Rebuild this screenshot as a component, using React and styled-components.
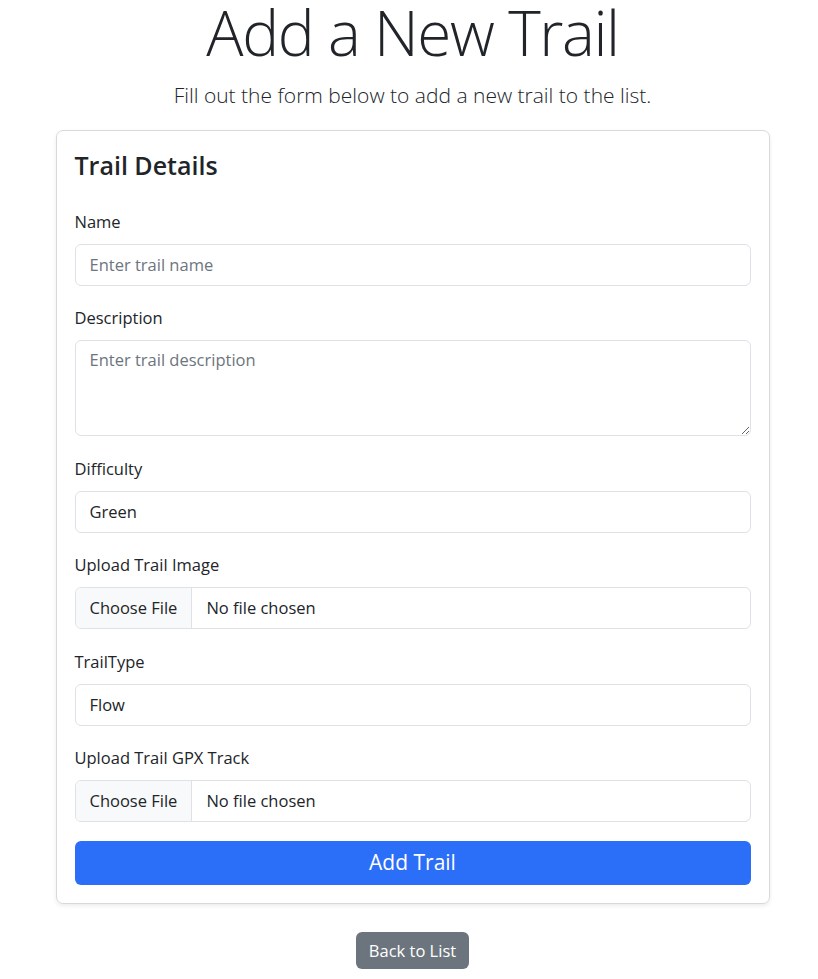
import React from 'react';
import styled, { createGlobalStyle } from 'styled-components';

const GlobalStyle = createGlobalStyle`
  body {
    margin: 0;
    background: #fff;
    color: #212529;
    font-family: 'Open Sans', 'Noto Sans', sans-serif;
    font-size: 17.6px;
    line-height: 1.5;
  }
`;

const Page = styled.main`
  display: flex;
  flex-direction: column;
  align-items: center;
  padding: 0 0 20px 7px;
`;

const Title = styled.h1`
  margin: 0;
  font-size: 62px;
  font-weight: 300;
  line-height: 65px;
  letter-spacing: -1.4px;
`;

const Lead = styled.p`
  margin: 15px 0 18px;
  font-size: 21px;
  font-weight: 300;
  line-height: 1.5;
`;

const Card = styled.section`
  box-sizing: border-box;
  width: 714px;
  padding: 19px 18px 18px;
  border: 1px solid #d9d9d9;
  border-radius: 7px;
  box-shadow: 0 2px 4px rgba(0, 0, 0, 0.08);
`;

const CardTitle = styled.h4`
  margin: 0 0 28px;
  font-size: 25px;
  font-weight: 600;
  line-height: 1.2;
`;

const Group = styled.div`
  margin-bottom: ${(p) => (p.last ? '0' : '18.5px')};
`;

const Label = styled.label`
  display: block;
  margin-bottom: 9px;
  line-height: 27px;
  font-size: 16.5px;
`;

const Control = styled.input`
  display: block;
  box-sizing: border-box;
  width: 100%;
  height: 42px;
  padding: 0 14px;
  border: 1px solid #dee2e6;
  border-radius: 6px;
  font: inherit;
  font-size: 16.5px;
  color: #212529;
  background: #fff;
  outline: none;

  &::placeholder {
    color: #6c757d;
  }
`;

const TextArea = styled.textarea`
  display: block;
  box-sizing: border-box;
  width: 100%;
  height: 96px;
  padding: 7px 14px;
  border: 1px solid #dee2e6;
  border-radius: 6px;
  font: inherit;
  font-size: 16.5px;
  line-height: 1.5;
  color: #212529;
  outline: none;

  &::placeholder {
    color: #6c757d;
  }
`;

const FileControl = styled.label`
  display: flex;
  align-items: stretch;
  box-sizing: border-box;
  height: 42px;
  border: 1px solid #dee2e6;
  border-radius: 6px;
  overflow: hidden;
  font-size: 16.5px;
  cursor: pointer;

  input {
    display: none;
  }
`;

const FileButton = styled.span`
  display: flex;
  align-items: center;
  padding: 0 14px;
  background: #f8f9fa;
  border-right: 1px solid #dee2e6;
`;

const FileName = styled.span`
  display: flex;
  align-items: center;
  padding: 0 14px;
`;

const SubmitButton = styled.button`
  display: block;
  width: 100%;
  height: 44px;
  margin-top: 19px;
  border: none;
  border-radius: 6px;
  background: #2b6ef8;
  color: #fff;
  font: inherit;
  font-size: 21px;
  cursor: pointer;
`;

const BackButton = styled.a`
  display: inline-block;
  margin-top: 28px;
  padding: 5px 13px;
  border-radius: 6px;
  background: #6c757d;
  color: #fff;
  font-size: 16.5px;
  line-height: 27px;
  text-decoration: none;
`;

function FileField({ id, label, last }) {
  return (
    <Group last={last}>
      <Label htmlFor={id}>{label}</Label>
      <FileControl>
        <input id={id} type="file" />
        <FileButton>Choose File</FileButton>
        <FileName>No file chosen</FileName>
      </FileControl>
    </Group>
  );
}

function TextField({ id, label, ...rest }) {
  return (
    <Group>
      <Label htmlFor={id}>{label}</Label>
      <Control id={id} type="text" {...rest} />
    </Group>
  );
}

export default function App() {
  return (
    <>
      <GlobalStyle />
      <Page>
        <Title>Add a New Trail</Title>
        <Lead>Fill out the form below to add a new trail to the list.</Lead>

        <Card>
          <CardTitle>Trail Details</CardTitle>
          <form onSubmit={(e) => e.preventDefault()}>
            <TextField id="name" label="Name" placeholder="Enter trail name" />
            <Group>
              <Label htmlFor="description">Description</Label>
              <TextArea id="description" placeholder="Enter trail description" />
            </Group>
            <TextField id="difficulty" label="Difficulty" defaultValue="Green" />
            <FileField id="image" label="Upload Trail Image" />
            <TextField id="trailType" label="TrailType" defaultValue="Flow" />
            <FileField id="gpx" label="Upload Trail GPX Track" last />
            <SubmitButton type="submit">Add Trail</SubmitButton>
          </form>
        </Card>

        <BackButton href="#">Back to List</BackButton>
      </Page>
    </>
  );
}
